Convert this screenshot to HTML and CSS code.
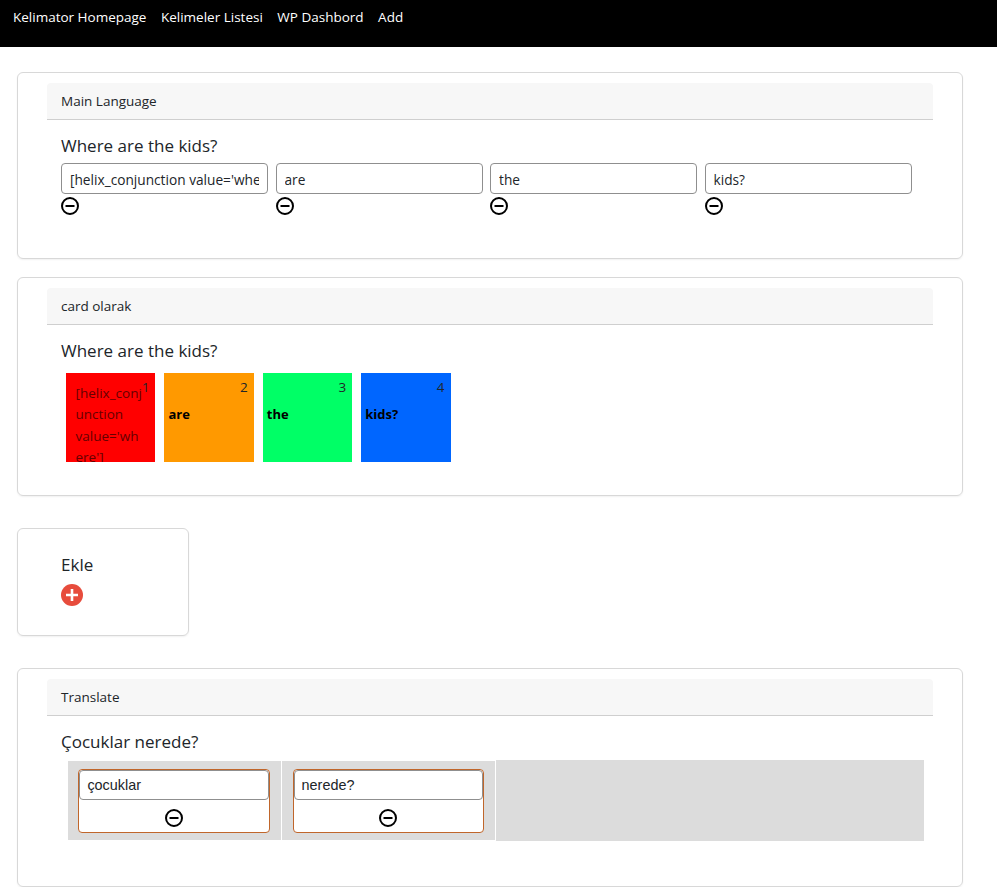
FILE: index.html
```html
<!DOCTYPE html>
<html>
<head>
  <title>Kelimator</title>
  <link rel="stylesheet" href="styles.css">
</head>
<body>
  <nav class="topbar">
    <a href="#">Kelimator Homepage</a>
    <a href="#">Kelimeler Listesi</a>
    <a href="#">WP Dashbord</a>
    <a href="#">Add</a>
  </nav>

  <main class="page">
    <section class="panel panel-main">
      <div class="panel-header">Main Language</div>
      <h4 class="sentence">Where are the kids?</h4>
      <div class="word-row">
        <div class="word">
          <input class="word-input" type="text" value="[helix_conjunction value='where']">
          <svg class="icon-minus" viewBox="0 0 18 18"><circle cx="9" cy="9" r="8" /><line x1="4.5" y1="9" x2="13.5" y2="9" /></svg>
        </div>
        <div class="word">
          <input class="word-input" type="text" value="are">
          <svg class="icon-minus" viewBox="0 0 18 18"><circle cx="9" cy="9" r="8" /><line x1="4.5" y1="9" x2="13.5" y2="9" /></svg>
        </div>
        <div class="word">
          <input class="word-input" type="text" value="the">
          <svg class="icon-minus" viewBox="0 0 18 18"><circle cx="9" cy="9" r="8" /><line x1="4.5" y1="9" x2="13.5" y2="9" /></svg>
        </div>
        <div class="word">
          <input class="word-input" type="text" value="kids?">
          <svg class="icon-minus" viewBox="0 0 18 18"><circle cx="9" cy="9" r="8" /><line x1="4.5" y1="9" x2="13.5" y2="9" /></svg>
        </div>
      </div>
    </section>

    <section class="panel panel-cards">
      <div class="panel-header">card olarak</div>
      <h4 class="sentence">Where are the kids?</h4>
      <div class="card-row">
        <div class="tile tile-red"><span class="tile-num">1</span><p class="tile-long">[helix_conjunction value='where']</p></div>
        <div class="tile tile-orange"><span class="tile-num">2</span><p class="tile-word">are</p></div>
        <div class="tile tile-green"><span class="tile-num">3</span><p class="tile-word">the</p></div>
        <div class="tile tile-blue"><span class="tile-num">4</span><p class="tile-word">kids?</p></div>
      </div>
    </section>

    <section class="panel panel-add">
      <h4 class="sentence">Ekle</h4>
      <svg class="icon-plus" viewBox="0 0 22 22"><circle cx="11" cy="11" r="11" /><path d="M11 5v12M5 11h12" /></svg>
    </section>

    <section class="panel panel-translate">
      <div class="panel-header">Translate</div>
      <h4 class="sentence">Çocuklar nerede?</h4>
      <div class="drop-row">
        <div class="drop-cell">
          <div class="drop-item">
            <input class="drop-input" type="text" value="çocuklar">
            <svg class="icon-minus" viewBox="0 0 18 18"><circle cx="9" cy="9" r="8" /><line x1="4.5" y1="9" x2="13.5" y2="9" /></svg>
          </div>
        </div>
        <div class="drop-cell">
          <div class="drop-item">
            <input class="drop-input" type="text" value="nerede?">
            <svg class="icon-minus" viewBox="0 0 18 18"><circle cx="9" cy="9" r="8" /><line x1="4.5" y1="9" x2="13.5" y2="9" /></svg>
          </div>
        </div>
        <div class="drop-rest"></div>
      </div>
    </section>
  </main>
</body>
</html>
```

FILE: styles.css
```css
* {
  box-sizing: border-box;
}

body {
  margin: 0;
  background-color: #fff;
  color: #212529;
  font-family: "Open Sans", "Noto Sans", sans-serif;
  font-size: 13.5px;
}

/* Top menu */
.topbar {
  display: flex;
  gap: 14.5px;
  height: 47px;
  padding: 8px 13px;
  background-color: #000;
}

.topbar a {
  color: #fff;
  text-decoration: none;
  line-height: 19px;
}

/* Panels */
.page {
  padding: 25px 34px 0 17px;
}

.panel {
  margin-bottom: 18px;
  padding: 10px 29px;
  border: 1px solid #d8d8d8;
  border-radius: 6px;
  box-shadow: 0 1px 2px rgba(0, 0, 0, 0.06);
}

.panel-main {
  height: 187px;
}

.panel-cards {
  height: 219px;
  margin-bottom: 32px;
}

.panel-add {
  width: 172px;
  height: 108px;
  margin-bottom: 32px;
  padding-top: 24px;
}

.panel-translate {
  height: 219px;
  margin-bottom: 0;
}

.panel-header {
  height: 37px;
  padding: 0 14px;
  line-height: 37px;
  background-color: #f7f7f7;
  border-bottom: 1px solid #cfcfcf;
  border-radius: 4px 4px 0 0;
}

.sentence {
  margin: 14px 0 0 14px;
  font-size: 17px;
  font-weight: 400;
  line-height: 24px;
}

.panel-add .sentence {
  margin-top: 0;
}

/* Word inputs */
.word-row {
  display: grid;
  grid-template-columns: repeat(4, 214.5px);
  margin: 5px 0 0 14px;
}

.word-input {
  display: block;
  width: 207.3px;
  height: 31px;
  padding: 1px 8px 0;
  border: 1px solid #8f8f8f;
  border-radius: 4px;
  color: #212529;
  font-family: inherit;
  font-size: 13.7px;
}

.icon-minus {
  display: block;
  width: 18px;
  height: 18px;
  margin-top: 3px;
  fill: none;
  stroke: #000;
  stroke-width: 2;
}

/* Coloured cards */
.card-row {
  display: flex;
  gap: 9px;
  margin: 10px 0 0 19px;
}

.tile {
  position: relative;
  width: 89.4px;
  height: 89px;
  overflow: hidden;
}

.tile-red { background-color: #ff0000; }
.tile-orange { background-color: #ff9900; }
.tile-green { background-color: #00ff66; }
.tile-blue { background-color: #0066ff; }

.tile-num {
  position: absolute;
  top: 5px;
  right: 6px;
  line-height: 18px;
}

.tile p {
  margin: 0;
}

.tile-long {
  padding: 9.5px 10px 0 9.5px;
  color: #660000;
  line-height: 21.5px;
  overflow-wrap: anywhere;
}

.tile-word {
  padding: 31px 4px 0;
  color: #000;
  font-size: 13px;
  font-weight: 700;
  line-height: 20px;
}

/* Add button */
.icon-plus {
  display: block;
  width: 22px;
  height: 22px;
  margin: 7px 0 0 14px;
  fill: #e74c3c;
  stroke: #fff;
  stroke-width: 2.6;
}

.icon-plus circle {
  stroke: none;
}

/* Translate drop zones */
.drop-row {
  display: flex;
  gap: 1px;
  align-items: center;
  margin: 6px 9px 0 21px;
}

.drop-cell {
  width: 213.2px;
  height: 79px;
  padding: 8px 0 8px 10.4px;
  background-color: #dcdcdc;
}

.drop-rest {
  flex: 1;
  height: 81px;
  background-color: #dcdcdc;
}

.drop-item {
  width: 191.4px;
  height: 64px;
  border: 1px solid #c0662b;
  border-radius: 4px;
  background-color: #fff;
}

.drop-input {
  display: block;
  width: 100%;
  height: 30px;
  padding: 0 7px;
  border: 1px solid #8f8f8f;
  border-radius: 4px;
  color: #212529;
  font-family: "Liberation Sans", Arial, sans-serif;
  font-size: 14.4px;
}

.drop-item .icon-minus {
  margin: 9px auto 0;
}
```
